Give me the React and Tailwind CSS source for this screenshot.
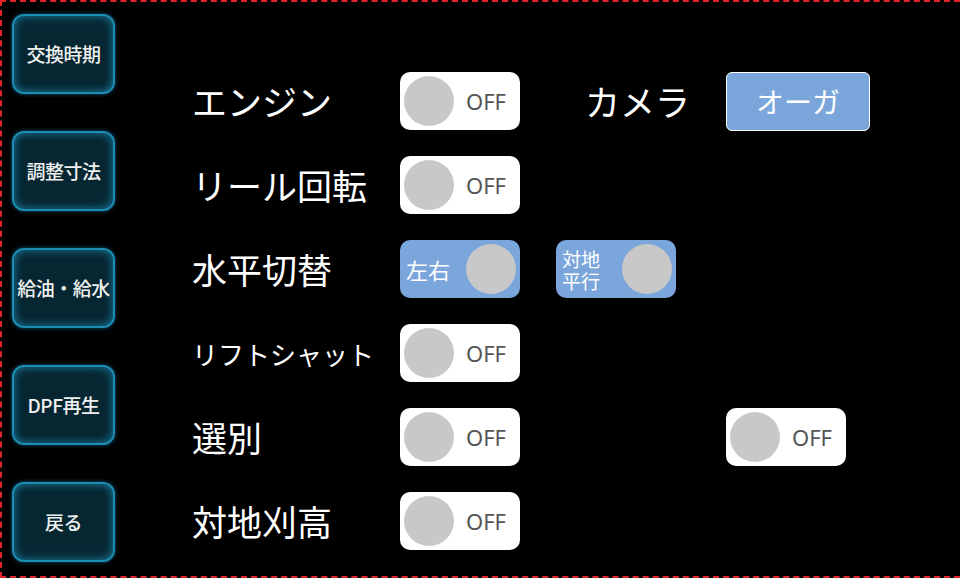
import React from "react";

const jp = { fontFamily: '"Noto Sans CJK JP", "Noto Sans", sans-serif' };

const menu = ["交換時期", "調整寸法", "給油・給水", "DPF再生", "戻る"];

function OffToggle() {
  return (
    <div className="flex h-[58px] w-[120px] items-center rounded-[10px] bg-white pl-[4px]">
      <div className="h-[50px] w-[50px] rounded-full bg-[#c8c8c8]" />
      <span className="ml-[12px] text-[22px] text-[#555555]" style={{ fontFamily: '"Noto Sans", sans-serif' }}>
        OFF
      </span>
    </div>
  );
}

function BlueToggle({ children }) {
  return (
    <div className="flex h-[58px] w-[120px] items-center justify-between rounded-[10px] bg-[#7ba6db] pl-[6px] pr-[4px]">
      <div className="text-white">{children}</div>
      <div className="h-[50px] w-[50px] rounded-full bg-[#c8c8c8]" />
    </div>
  );
}

function Label({ children, small }) {
  return (
    <div className={`w-[208px] text-white ${small ? "text-[26px]" : "text-[35px]"}`}>
      {children}
    </div>
  );
}

export default function App() {
  return (
    <div
      className="flex h-[578px] w-[960px] border-y-2 border-l-2 border-dashed border-[#e0242c] bg-black"
      style={jp}
    >
      <div className="flex flex-col gap-[37px] pl-[10px] pt-[12px]">
        {menu.map((m) => (
          <div
            key={m}
            className="flex h-[80px] w-[103px] items-center justify-center rounded-[12px] border-2 border-[#1b8cb2] bg-[#062631] text-[19px] font-medium tracking-[-0.5px] text-[#f0f0f0] shadow-[inset_0_0_10px_#1b7fa3,0_0_4px_#105a75]"
          >
            {m}
          </div>
        ))}
      </div>

      <div className="ml-[77px] flex flex-col pt-[57px]">
        <div className="flex h-[84px] items-center">
          <Label>エンジン</Label>
          <OffToggle />
          <div className="ml-[65px] w-[141px] text-[35px] text-white">カメラ</div>
          <div className="flex h-[59px] w-[144px] items-center justify-center rounded-[6px] border border-white bg-[#7ba6db] text-[28px] text-white">
            オーガ
          </div>
        </div>
        <div className="flex h-[84px] items-center">
          <Label>リール回転</Label>
          <OffToggle />
        </div>
        <div className="flex h-[84px] items-center">
          <Label>水平切替</Label>
          <BlueToggle>
            <span className="text-[22px]">左右</span>
          </BlueToggle>
          <div className="ml-[36px]">
            <BlueToggle>
              <div className="flex flex-col gap-[1px] text-[19px] leading-[21px]">
                <span>対地</span>
                <span>平行</span>
              </div>
            </BlueToggle>
          </div>
        </div>
        <div className="flex h-[84px] items-center">
          <Label small>リフトシャット</Label>
          <OffToggle />
        </div>
        <div className="flex h-[84px] items-center">
          <Label>選別</Label>
          <OffToggle />
          <div className="ml-[206px]">
            <OffToggle />
          </div>
        </div>
        <div className="flex h-[84px] items-center">
          <Label>対地刈高</Label>
          <OffToggle />
        </div>
      </div>
    </div>
  );
}
